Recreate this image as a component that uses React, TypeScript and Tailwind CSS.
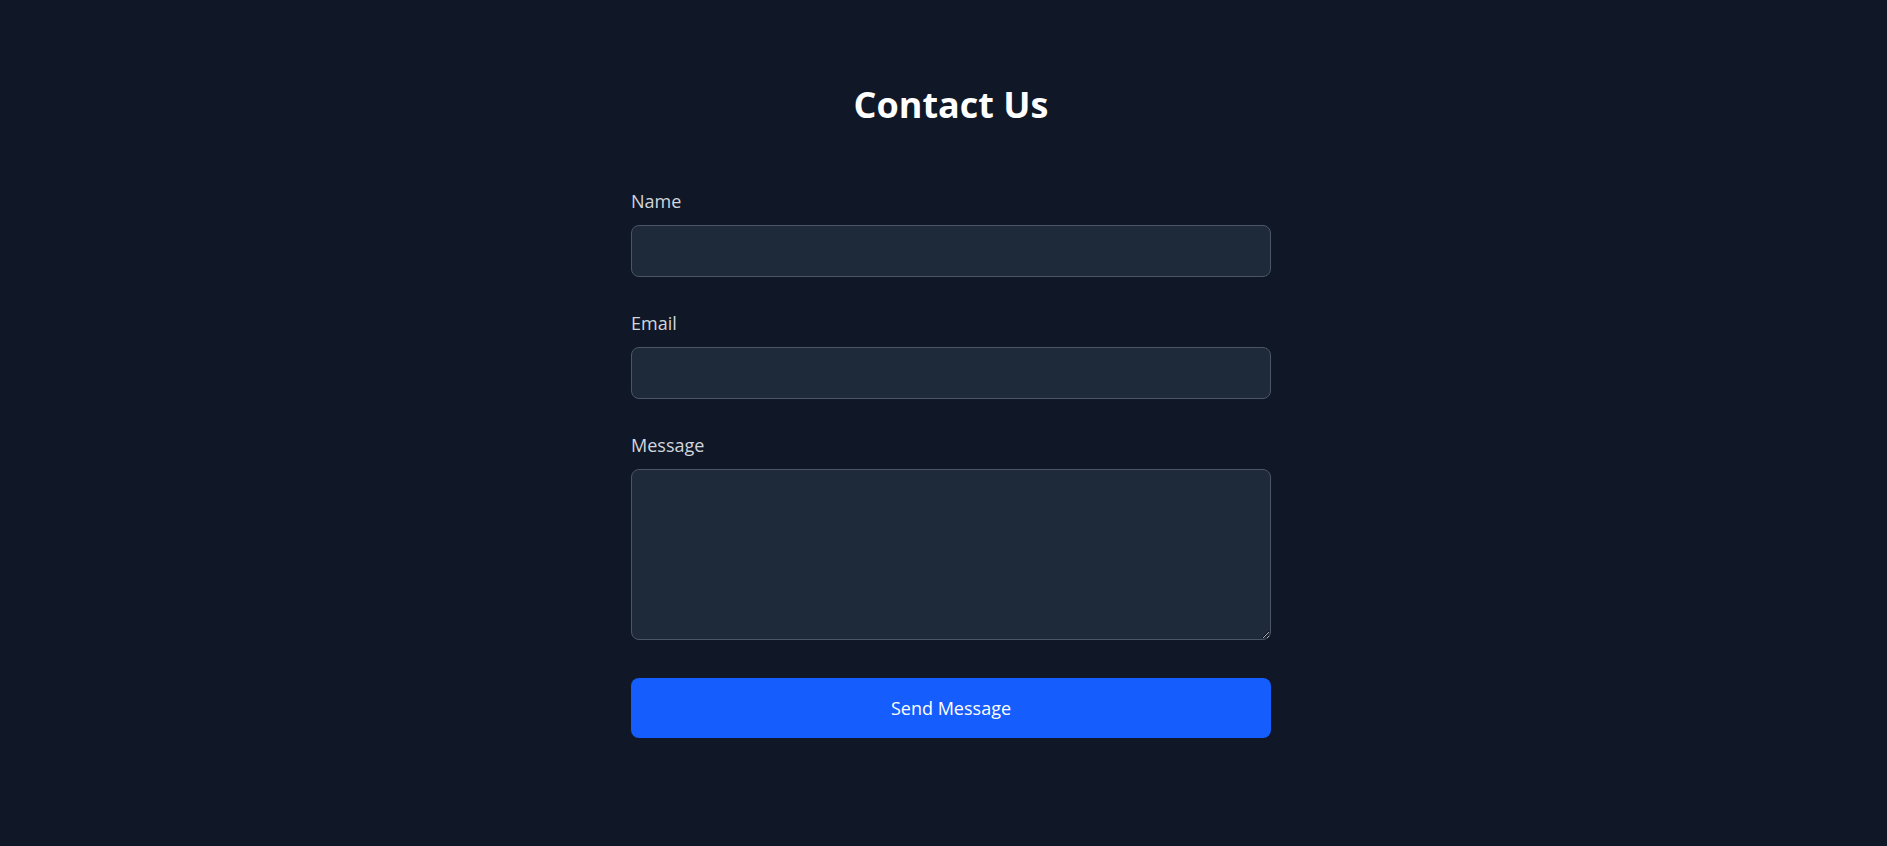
import { useState } from "react";

const CAMPOS = [
  { id: "name", rotulo: "Name", tipo: "text" },
  { id: "email", rotulo: "Email", tipo: "email" },
] as const;

export default function App() {
  const [valores, setValores] = useState({ name: "", email: "", message: "" });

  function mudar(id: keyof typeof valores, valor: string) {
    setValores((v) => ({ ...v, [id]: valor }));
  }

  return (
    <div className="min-h-screen bg-gray-900 pt-[85px] pl-[15px] font-['Open_Sans',sans-serif]">
      <div className="mx-auto w-[640px]">
        <h1 className="mb-[62px] text-center text-4xl font-bold text-white">Contact Us</h1>
        <form className="flex flex-col gap-[32px]" onSubmit={(e) => e.preventDefault()}>
          {CAMPOS.map((c) => (
            <div key={c.id}>
              <label htmlFor={c.id} className="mb-[10px] block text-lg leading-7 text-gray-300">
                {c.rotulo}
              </label>
              <input
                id={c.id}
                type={c.tipo}
                value={valores[c.id]}
                onChange={(e) => mudar(c.id, e.target.value)}
                className="block h-[52px] w-full rounded-lg border border-gray-600 bg-gray-800 px-4 text-lg text-white outline-none"
              />
            </div>
          ))}
          <div>
            <label htmlFor="message" className="mb-[10px] block text-lg leading-7 text-gray-300">
              Message
            </label>
            <textarea
              id="message"
              value={valores.message}
              onChange={(e) => mudar("message", e.target.value)}
              className="block h-[171px] w-full rounded-lg border border-gray-600 bg-gray-800 px-4 py-3 text-lg text-white outline-none"
            />
          </div>
          <button
            type="submit"
            className="mt-[6px] h-[60px] w-full rounded-lg bg-blue-600 text-lg text-white"
          >
            Send Message
          </button>
        </form>
      </div>
    </div>
  );
}
